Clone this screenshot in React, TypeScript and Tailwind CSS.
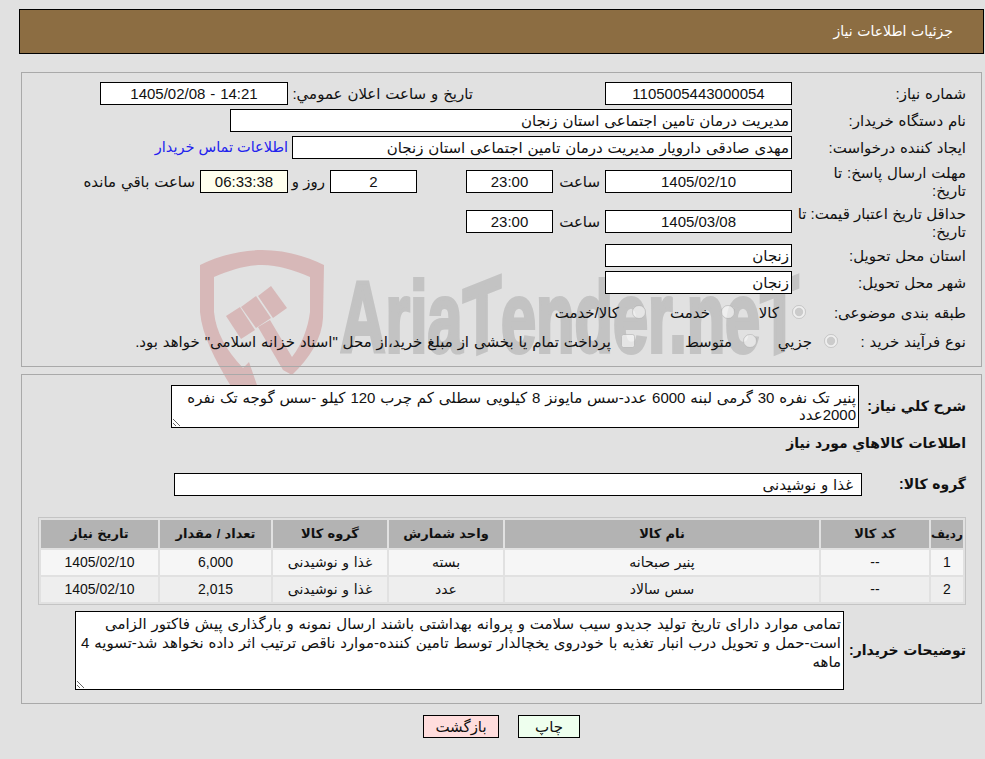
import type { ReactNode } from 'react';

const Field = ({ className = '', children }: { className?: string; children?: ReactNode }) => (
  <div className={`h-[23px] shrink-0 border border-black flex items-center text-[15px] leading-none ${className}`}>
    {children}
  </div>
);

const Label = ({ className = '', children }: { className?: string; children: ReactNode }) => (
  <div className={`shrink-0 text-[15px] text-[#111] ${className}`}>{children}</div>
);

const Radio = ({ checked, name }: { checked?: boolean; name: string }) => (
  <input type="radio" name={name} disabled defaultChecked={checked} className="m-0 block w-[14px] h-[14px] shrink-0" />
);

const Watermark = () => (
  <div className="absolute left-0 top-0 pointer-events-none">
    <svg width="130" height="140" viewBox="198 248 130 140" className="absolute left-[198px] top-[248px]">
      <g fill="#d7b8b8">
        <path d="M262 250 C240 250 218 256 200 265 L200 312 C202 335 215 360 232 388 L258 388 L249 362 L243 368 C226 350 216 332 214 312 L214 277 C230 270 246 265 262 265 C278 265 294 270 310 277 L310 312 C308 328 302 344 292 357 L270 320 L258 327 L283 370 L292 375 C310 358 322 338 323 318 L324 265 C306 256 284 250 262 250 Z" />
        <path d="M226 316 L240 307 L255 330 L241 339 Z" />
        <path d="M241 307 L256 296 L271 318 L256 328 Z" />
        <path d="M258 296 L271 286 L287 308 L273 318 Z" />
      </g>
    </svg>
    <div
      dir="ltr"
      className="absolute left-[340px] top-[267px] flex origin-left scale-x-[0.63] whitespace-nowrap text-[100px] leading-[100px] font-bold text-[#c3c3c3] [-webkit-text-stroke:4px_#c3c3c3] [font-family:'Liberation_Sans',sans-serif]"
    >
      <span>Aria</span>
      <span className="inline-block -skew-y-[14deg]">T</span>
      <span>ender.ne</span>
      <span className="inline-block -skew-y-[14deg]">T</span>
    </div>
  </div>
);

const goods = [
  { row: 1, name: 'پنیر صبحانه', unit: 'بسته', qty: '6,000', bg: 'bg-[#f6f6f6]' },
  { row: 2, name: 'سس سالاد', unit: 'عدد', qty: '2,015', bg: 'bg-[#eeeeee]' },
];

export default function App() {
  return (
    <div dir="rtl" className="relative min-h-[759px] bg-[#e1e1e1] pt-[9px] pl-[19px] pr-[1px] text-[#111] [word-spacing:0.7px] [font-family:'Liberation_Sans','DejaVu_Sans',sans-serif]">
      <Watermark />

      <div className="relative h-[45px] border border-black bg-[#8c6d42] flex items-center pr-[30px] text-white text-[14px]">
        جزئیات اطلاعات نیاز
      </div>

      <div className="relative mt-[18px] mx-[2px] h-[295px] border border-[#a9a9a9] pt-[9px]">
        <div className="flex h-[27px]">
          <Label className="w-[189px] pr-[15px] leading-[23px]">شماره نیاز:</Label>
          <Field className="w-[187px] justify-center bg-white">1105005443000054</Field>
          <div className="w-[132px]" />
          <Label className="w-[185px] leading-[23px]">تاریخ و ساعت اعلان عمومي:</Label>
          <Field className="w-[188px] justify-center bg-white"><span dir="ltr">1405/02/08 - 14:21</span></Field>
        </div>
        <div className="flex h-[27px]">
          <Label className="w-[189px] pr-[15px] leading-[23px]">نام دستگاه خریدار:</Label>
          <Field className="w-[562px] pr-[2px] bg-white">مدیریت درمان تامین اجتماعی استان زنجان</Field>
        </div>
        <div className="flex h-[34px]">
          <Label className="w-[189px] pr-[15px] leading-[23px]">ایجاد کننده درخواست:</Label>
          <Field className="w-[500px] pr-[2px] bg-white">مهدی صادقی دارویار مدیریت درمان تامین اجتماعی استان زنجان</Field>
          <a className="mr-[4px] text-[14.5px] leading-[23px] text-[#2222ee] [word-spacing:0]">اطلاعات تماس خریدار</a>
        </div>
        <div className="flex h-[40px]">
          <Label className="w-[189px] pr-[15px] -mt-[6px] leading-[18px]">مهلت ارسال پاسخ: تا<br />تاریخ:</Label>
          <Field className="w-[187px] justify-center bg-white">1405/02/10</Field>
          <Label className="w-[52px] pr-[5px] leading-[23px]">ساعت</Label>
          <Field className="w-[87px] justify-center bg-white">23:00</Field>
          <div className="w-[49px]" />
          <Field className="w-[87px] justify-center bg-white">2</Field>
          <Label className="w-[42px] pr-[5px] leading-[23px] whitespace-nowrap [word-spacing:0]">روز و</Label>
          <Field className="w-[88px] justify-center bg-[#ffffee]">06:33:38</Field>
          <Label className="pr-[5px] leading-[23px]">ساعت باقي مانده</Label>
        </div>
        <div className="flex h-[34px]">
          <Label className="w-[189px] pr-[15px] -mt-[5px] leading-[18px] [word-spacing:0]">حداقل تاریخ اعتبار قیمت: تا<br />تاریخ:</Label>
          <Field className="w-[187px] justify-center bg-white">1405/03/08</Field>
          <Label className="w-[52px] pr-[5px] leading-[23px]">ساعت</Label>
          <Field className="w-[87px] justify-center bg-white">23:00</Field>
        </div>
        <div className="flex h-[27px]">
          <Label className="w-[189px] pr-[15px] leading-[23px]">استان محل تحویل:</Label>
          <Field className="w-[187px] pr-[2px] bg-white">زنجان</Field>
        </div>
        <div className="flex h-[27px]">
          <Label className="w-[189px] pr-[15px] leading-[23px]">شهر محل تحویل:</Label>
          <Field className="w-[187px] pr-[2px] bg-white">زنجان</Field>
        </div>
        <div className="flex h-[28px] items-center">
          <Label className="w-[175px] pr-[15px] leading-[23px]">طبقه بندی موضوعی:</Label>
          <Radio name="subject" checked />
          <Label className="w-[44px] mr-[13px] leading-[23px]">کالا</Label>
          <Radio name="subject" />
          <Label className="w-[64px] mr-[11px] leading-[23px]">خدمت</Label>
          <Radio name="subject" />
          <Label className="mr-[13px] leading-[23px]">کالا/خدمت</Label>
        </div>
        <div className="flex h-[30px] items-center">
          <Label className="w-[143px] pr-[15px] leading-[23px]">نوع فرآیند خرید :</Label>
          <Radio name="process" checked />
          <Label className="w-[55px] mr-[12px] leading-[23px]">جزيي</Label>
          <Radio name="process" />
          <Label className="w-[97px] mr-[11px] leading-[23px]">متوسط</Label>
          <input type="checkbox" disabled className="m-0 block w-[14px] h-[14px] shrink-0" />
          <Label className="mr-[10px] whitespace-nowrap leading-[23px]">پرداخت تمام یا بخشی از مبلغ خرید،از محل "اسناد خزانه اسلامی" خواهد بود.</Label>
        </div>
      </div>

      <div className="relative mt-[7px] mx-[2px] h-[330px] border border-[#a9a9a9] pt-[10px]">
        <div className="flex items-center">
          <div className="w-[122px] shrink-0 pr-[15px] text-[14px] font-bold whitespace-nowrap">شرح کلي نیاز:</div>
          <textarea
            readOnly
            defaultValue="پنیر تک نفره 30 گرمی لبنه 6000 عدد-سس مایونز 8 کیلویی سطلی کم چرب 120 کیلو -سس گوجه تک نفره 2000عدد"
            className="block w-[688px] h-[43px] border border-black bg-white pr-[2px] pl-[2px] pt-[3px] text-[15px] leading-[17px] overflow-hidden outline-none [word-spacing:0.7px]"
          />
        </div>
        <div className="mt-[5px] pr-[15px] text-[14px] font-bold leading-[21px]">اطلاعات کالاهاي مورد نیاز</div>
        <div className="flex items-center mt-[19px]">
          <div className="w-[119px] shrink-0 pr-[15px] text-[14px] font-bold">گروه کالا:</div>
          <Field className="w-[688px] pr-[8px] bg-white">غذا و نوشیدنی</Field>
        </div>
        <div className="mt-[21px] mr-[15px] ml-[16px] border border-[#c4c4c4]">
          <table className="w-full table-fixed border-separate border-spacing-[2px] text-center text-[14px]">
            <thead>
              <tr className="h-[28px] bg-[#b3b3b3] text-[13px]">
                <th className="w-[32px] font-bold text-[12px]">ردیف</th>
                <th className="w-[108px] font-bold">کد کالا</th>
                <th className="w-[314px] font-bold">نام کالا</th>
                <th className="w-[114px] font-bold">واحد شمارش</th>
                <th className="w-[114px] font-bold">گروه کالا</th>
                <th className="w-[111px] font-bold">تعداد / مقدار</th>
                <th className="font-bold">تاریخ نیاز</th>
              </tr>
            </thead>
            <tbody>
              {goods.map((g) => (
                <tr key={g.row} className={`h-[25px] ${g.bg}`}>
                  <td>{g.row}</td>
                  <td>--</td>
                  <td>{g.name}</td>
                  <td>{g.unit}</td>
                  <td>غذا و نوشیدنی</td>
                  <td>{g.qty}</td>
                  <td>1405/02/10</td>
                </tr>
              ))}
            </tbody>
          </table>
        </div>
        <div className="flex items-center mt-[6px]">
          <div className="w-[137px] shrink-0 pr-[15px] text-[14px] font-bold whitespace-nowrap">توضیحات خریدار:</div>
          <textarea
            readOnly
            defaultValue="تمامی موارد دارای تاریخ تولید جدیدو سیب سلامت و پروانه بهداشتی باشند ارسال نمونه و بارگذاری پیش فاکتور الزامی است-حمل و تحویل درب انبار تغذیه با خودروی یخچالدار توسط تامین کننده-موارد ناقص ترتیب اثر داده نخواهد شد-تسویه 4 ماهه"
            className="block w-[769px] h-[79px] border border-black bg-white pr-[2px] pl-[2px] pt-[2px] text-[15px] leading-[19px] overflow-hidden outline-none [word-spacing:0.7px]"
          />
        </div>
      </div>

      <div className="relative flex justify-center gap-[19px] mt-[11px]">
        <button className="w-[62px] h-[23px] border border-black bg-[#eeffee] text-[15px] leading-none">چاپ</button>
        <button className="w-[76px] h-[23px] border border-black bg-[#ffdddd] text-[15px] leading-none">بازگشت</button>
      </div>
    </div>
  );
}
